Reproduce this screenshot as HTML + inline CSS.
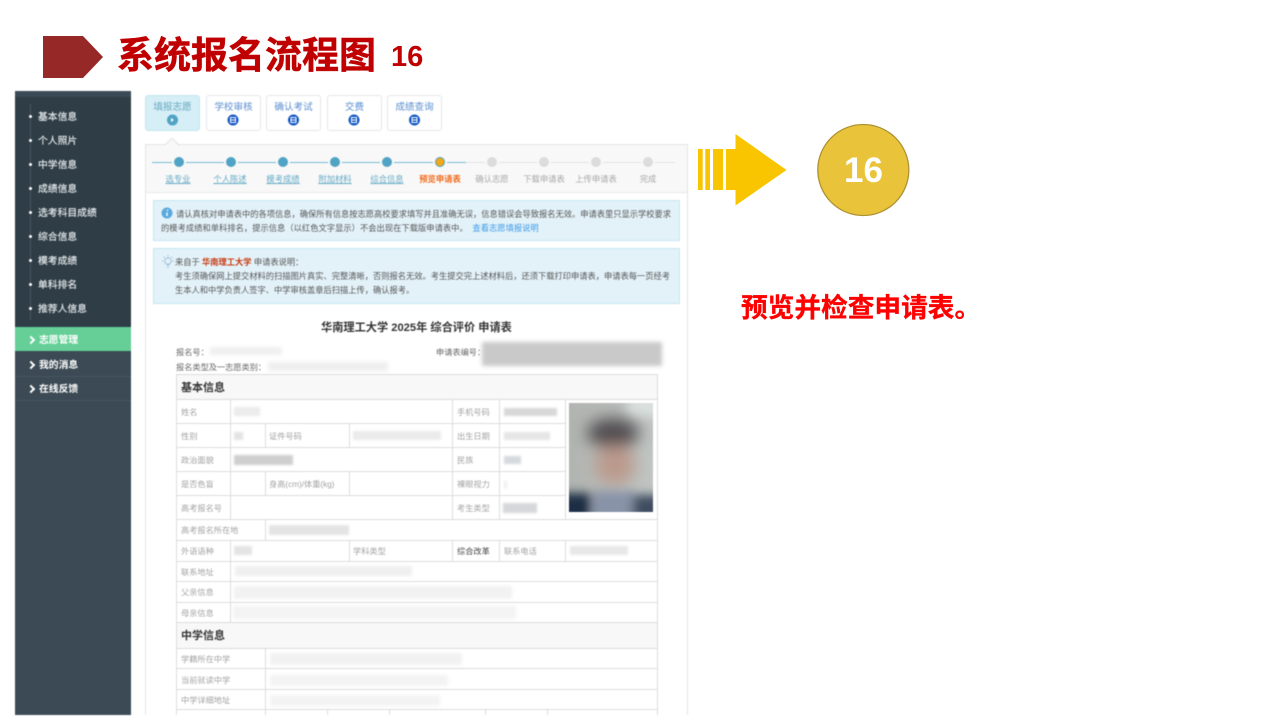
<!DOCTYPE html>
<html lang="zh"><head><meta charset="utf-8"><title>系统报名流程图</title>
<style>
html,body{margin:0;padding:0;background:#fff}
body{width:1280px;height:720px;position:relative;overflow:hidden;font-family:"Liberation Sans","Noto Sans CJK SC",sans-serif}
.t{position:absolute;white-space:nowrap;line-height:14px}
.r{position:absolute}
#app{position:absolute;left:0;top:0;width:1280px;height:715px;overflow:hidden;filter:blur(.45px)}
.s{font-size:9.8px;color:#e6ebed;left:38px;margin-top:2px;-webkit-text-stroke:.15px #e6ebed}
.sb{font-size:9.8px;color:#fff;left:39px;margin-top:2px;font-weight:bold}
.b{position:absolute;width:3px;height:3px;border-radius:50%;background:#fff;left:29px}
.c{position:absolute;left:28px;width:4px;height:4px;margin-top:1px;border:solid #fff;border-width:2px 2px 0 0;transform:rotate(45deg)}
.tab{position:absolute;top:95px;height:34px;background:#fff;border:1px solid #e3e6e8;border-radius:3px;text-align:center;font-size:9.6px;line-height:23px;color:#5b8fd0;white-space:nowrap}
.dot{position:absolute;top:157px;width:10px;height:10px;border-radius:50%;background:#4fa3c4}
.st{position:absolute;top:172px;width:60px;text-align:center;font-size:8.3px;line-height:14px;white-space:nowrap}
.u{color:#63aac6;text-decoration:underline}
.g{color:#a8a8a8}
.h{position:absolute;background:#dcdcdc;height:1px}
.v{position:absolute;background:#dcdcdc;width:1px}
.l{font-size:8.2px;color:#a3a3a3;margin-top:1px}
.bk{position:absolute;background:#d8d8d8;filter:blur(2px)}
.a{font-size:8.25px;color:#555;margin-top:1px}
.hd{font-size:37px;line-height:42px;font-weight:bold;color:#c00000;font-family:'Noto Sans CJK SC',sans-serif;-webkit-text-stroke:.5px #c00000}
</style></head><body>

<svg style="position:absolute;left:0;top:0" width="120" height="90"><polygon points="43,36 83,36 103,57 83,78 43,78" fill="#962828"/></svg>
<div class="t hd" style="left:117px;top:31px">系统报名流程图</div>
<div class="t" style="left:391px;top:37px;font-size:29px;line-height:40px;font-weight:bold;color:#c00000;font-family:'Liberation Sans',sans-serif">16</div>

<div id="app">
<div class="r" style="left:15px;top:91px;width:116px;height:624px;background:#3b4a54"></div>
<div class="r" style="left:15px;top:97px;width:116px;height:230px;background:#2f3d46"></div>
<div class="r" style="left:30px;top:104px;width:1px;height:216px;background:#465560"></div>
<div class="t s" style="top:109px">基本信息</div><div class="b" style="top:115px"></div>
<div class="t s" style="top:133px">个人照片</div><div class="b" style="top:139px"></div>
<div class="t s" style="top:157px">中学信息</div><div class="b" style="top:163px"></div>
<div class="t s" style="top:181px">成绩信息</div><div class="b" style="top:187px"></div>
<div class="t s" style="top:205px">选考科目成绩</div><div class="b" style="top:211px"></div>
<div class="t s" style="top:229px">综合信息</div><div class="b" style="top:235px"></div>
<div class="t s" style="top:253px">模考成绩</div><div class="b" style="top:259px"></div>
<div class="t s" style="top:277px">单科排名</div><div class="b" style="top:283px"></div>
<div class="t s" style="top:301px">推荐人信息</div><div class="b" style="top:307px"></div>
<div class="r" style="left:15px;top:327px;width:116px;height:24px;background:#65cf97"></div>
<div class="r" style="left:15px;top:376px;width:116px;height:1px;background:#455560"></div>
<div class="r" style="left:15px;top:400px;width:116px;height:1px;background:#455560"></div>
<div class="t sb" style="top:332px">志愿管理</div><div class="c" style="top:336px"></div>
<div class="t sb" style="top:357px">我的消息</div><div class="c" style="top:361px"></div>
<div class="t sb" style="top:381px">在线反馈</div><div class="c" style="top:385px"></div>

<div class="tab" style="left:145px;width:53px;background:#d6eef6;border-color:#c5e5ef;color:#66aac4">填报志愿</div>
<div class="tab" style="left:206px;width:53px">学校审核</div>
<div class="tab" style="left:266px;width:53px">确认考试</div>
<div class="tab" style="left:327px;width:53px">交费</div>
<div class="tab" style="left:387px;width:53px">成绩查询</div>
<svg class="r" style="left:145px;top:95px" width="300" height="36">
<circle cx="27.500" cy="25" r="5.500" fill="#4fa3c4"/><polygon points="26,23 26,27 29,25" fill="#fff"/>
<g><circle cx="88" cy="25" r="5.500" fill="#0f55c4"/><rect x="85.500" y="22.500" width="5" height="5" fill="none" stroke="#fff"/><path d="M85.500 25h5" stroke="#fff"/></g>
<g><circle cx="148.500" cy="25" r="5.500" fill="#0f55c4"/><rect x="146" y="22.500" width="5" height="5" fill="none" stroke="#fff"/><path d="M146 25h5" stroke="#fff"/></g>
<g><circle cx="209" cy="25" r="5.500" fill="#0f55c4"/><rect x="206.500" y="22.500" width="5" height="5" fill="none" stroke="#fff"/><path d="M206.500 25h5" stroke="#fff"/></g>
<g><circle cx="269.500" cy="25" r="5.500" fill="#0f55c4"/><rect x="267" y="22.500" width="5" height="5" fill="none" stroke="#fff"/><path d="M267 25h5" stroke="#fff"/></g>
</svg>

<div class="r" style="left:145px;top:144px;width:541px;height:580px;border:1px solid #e4e4e4;background:#fff"></div>
<div class="r" style="left:146px;top:145px;width:541px;height:47px;background:#f8f8f8;border-bottom:1px solid #e8e8e8"></div>
<svg class="r" style="left:165px;top:138px" width="16" height="8"><polygon points="0,7 7,0 14,7" fill="#f8f8f8" stroke="#e4e4e4"/><rect x="1" y="6.500" width="12" height="2" fill="#f8f8f8"/></svg>

<div class="r" style="left:152px;top:162px;width:314px;height:1px;background:#75bcd6"></div>
<div class="r" style="left:466px;top:162px;width:209px;height:1px;background:#e2e2e2"></div>
<div class="dot" style="left:174px;box-shadow:0 0 0 2px #f8f8f8"></div>
<div class="dot" style="left:226px;box-shadow:0 0 0 2px #f8f8f8"></div>
<div class="dot" style="left:278px;box-shadow:0 0 0 2px #f8f8f8"></div>
<div class="dot" style="left:330px;box-shadow:0 0 0 2px #f8f8f8"></div>
<div class="dot" style="left:382px;box-shadow:0 0 0 2px #f8f8f8"></div>
<div class="dot" style="left:435px;top:157px;background:#f3a712;box-sizing:border-box;border:1.500px solid #4fa3c4;box-shadow:0 0 0 2px #f8f8f8"></div>
<div class="dot" style="left:487px;background:#dcdcdc;box-shadow:0 0 0 2px #f8f8f8"></div>
<div class="dot" style="left:539px;background:#dcdcdc;box-shadow:0 0 0 2px #f8f8f8"></div>
<div class="dot" style="left:591px;background:#dcdcdc;box-shadow:0 0 0 2px #f8f8f8"></div>
<div class="dot" style="left:643px;background:#dcdcdc;box-shadow:0 0 0 2px #f8f8f8"></div>
<div class="st" style="left:148px"><span class="u">选专业</span></div>
<div class="st" style="left:200px"><span class="u">个人陈述</span></div>
<div class="st" style="left:253px"><span class="u">模考成绩</span></div>
<div class="st" style="left:305px"><span class="u">附加材料</span></div>
<div class="st" style="left:357px"><span class="u">综合信息</span></div>
<div class="st" style="left:410px;color:#f26a1b;font-weight:bold">预览申请表</div>
<div class="st g" style="left:462px">确认志愿</div>
<div class="st g" style="left:514px">下载申请表</div>
<div class="st g" style="left:566px">上传申请表</div>
<div class="st g" style="left:618px">完成</div>

<div class="r" style="left:153px;top:200px;width:525px;height:39px;background:#e3f2f9;border:1px solid #c5e6f2"></div>
<svg class="r" style="left:161px;top:207px" width="13" height="13"><circle cx="6" cy="6" r="5.500" fill="#5aa9de"/><path d="M6.500 2.800v1.200M6 5.500v3.500" stroke="#fff" stroke-width="1.400"/></svg>
<div class="t a" style="left:176px;top:207px">请认真核对申请表中的各项信息，确保所有信息按志愿高校要求填写并且准确无误，信息错误会导致报名无效。申请表里只显示学校要求</div>
<div class="t a" style="left:161px;top:221px;letter-spacing:.04px">的模考成绩和单科排名，提示信息（以红色文字显示）不会出现在下载版申请表中。 &nbsp;<span style="color:#3c9be8">查看志愿填报说明</span></div>

<div class="r" style="left:153px;top:248px;width:525px;height:54px;background:#e3f2f9;border:1px solid #c5e6f2"></div>
<svg class="r" style="left:161px;top:254px" width="14" height="15" fill="none" stroke="#8fb4cf" stroke-width=".8"><circle cx="7" cy="7" r="3.200"/><path d="M5.500 11h3M6 13h2M7 1v1.500M1 7h1.500M11.500 7H13M2.800 2.800l1 1M11.200 2.800l-1 1"/></svg>
<div class="t a" style="left:175px;top:255px">来自于 <b style="color:#c8380f">华南理工大学</b> 申请表说明：</div>
<div class="t a" style="left:175px;top:269px">考生须确保网上提交材料的扫描图片真实、完整清晰，否则报名无效。考生提交完上述材料后，还须下载打印申请表，申请表每一页经考</div>
<div class="t a" style="left:175px;top:283px">生本人和中学负责人签字、中学审核盖章后扫描上传，确认报考。</div>

<div class="t" style="left:321px;top:321px;font-size:11.200px;font-weight:bold;color:#333">华南理工大学 2025年 综合评价 申请表</div>
<div class="t l" style="left:176px;top:345px;color:#666">报名号：</div>
<div class="t l" style="left:176px;top:360px;color:#666">报名类型及一志愿类别：</div>
<div class="t l" style="left:436px;top:345px;color:#666">申请表编号：</div>
<div class="bk" style="left:210px;top:347px;width:72px;height:8px;background:#efefef"></div>
<div class="bk" style="left:268px;top:362px;width:120px;height:9px;background:#eeeeee"></div>
<div class="bk" style="left:482px;top:342px;width:180px;height:24px;background:#c9c9c9"></div>

<!-- table -->
<div class="r" style="left:177px;top:375px;width:480px;height:24px;background:#f8f8f8"></div>
<div class="r" style="left:177px;top:623px;width:480px;height:25px;background:#f8f8f8"></div>
<div class="h" style="left:176px;width:482px;top:374px"></div>
<div class="h" style="left:176px;width:482px;top:399px"></div>
<div class="h" style="left:176px;width:389px;top:423px"></div>
<div class="h" style="left:176px;width:389px;top:447px"></div>
<div class="h" style="left:176px;width:389px;top:471px"></div>
<div class="h" style="left:176px;width:389px;top:495px"></div>
<div class="h" style="left:176px;width:482px;top:519px"></div>
<div class="h" style="left:176px;width:482px;top:540px"></div>
<div class="h" style="left:176px;width:482px;top:561px"></div>
<div class="h" style="left:176px;width:482px;top:581px"></div>
<div class="h" style="left:176px;width:482px;top:602px"></div>
<div class="h" style="left:176px;width:482px;top:622px"></div>
<div class="h" style="left:176px;width:482px;top:648px"></div>
<div class="h" style="left:176px;width:482px;top:668px"></div>
<div class="h" style="left:176px;width:482px;top:689px"></div>
<div class="h" style="left:176px;width:482px;top:709px"></div>
<div class="v" style="left:176px;top:374px;height:341px"></div>
<div class="v" style="left:657px;top:374px;height:341px"></div>
<div class="v" style="left:230px;top:399px;height:120px"></div>
<div class="v" style="left:265px;top:423px;height:24px"></div>
<div class="v" style="left:349px;top:423px;height:24px"></div>
<div class="v" style="left:265px;top:471px;height:24px"></div>
<div class="v" style="left:349px;top:471px;height:24px"></div>
<div class="v" style="left:452px;top:399px;height:120px"></div>
<div class="v" style="left:499px;top:399px;height:120px"></div>
<div class="v" style="left:565px;top:399px;height:120px"></div>
<div class="v" style="left:265px;top:519px;height:21px"></div>
<div class="v" style="left:230px;top:540px;height:82px"></div>
<div class="v" style="left:349px;top:540px;height:21px"></div>
<div class="v" style="left:452px;top:540px;height:21px"></div>
<div class="v" style="left:499px;top:540px;height:21px"></div>
<div class="v" style="left:565px;top:540px;height:21px"></div>
<div class="v" style="left:265px;top:648px;height:67px"></div>
<div class="v" style="left:327px;top:709px;height:6px"></div>
<div class="v" style="left:389px;top:709px;height:6px"></div>
<div class="v" style="left:485px;top:709px;height:6px"></div>
<div class="v" style="left:547px;top:709px;height:6px"></div>

<div class="t" style="left:181px;top:381px;font-size:11px;font-weight:bold;color:#333">基本信息</div>
<div class="t" style="left:181px;top:629px;font-size:11px;font-weight:bold;color:#333">中学信息</div>
<div class="t l" style="left:181px;top:405px">姓名</div>
<div class="t l" style="left:457px;top:405px">手机号码</div>
<div class="t l" style="left:181px;top:429px">性别</div>
<div class="t l" style="left:269px;top:429px">证件号码</div>
<div class="t l" style="left:457px;top:429px">出生日期</div>
<div class="t l" style="left:181px;top:453px">政治面貌</div>
<div class="t l" style="left:457px;top:453px">民族</div>
<div class="t l" style="left:181px;top:477px">是否色盲</div>
<div class="t l" style="left:269px;top:477px">身高(cm)/体重(kg)</div>
<div class="t l" style="left:457px;top:477px">裸眼视力</div>
<div class="t l" style="left:181px;top:501px">高考报名号</div>
<div class="t l" style="left:457px;top:501px">考生类型</div>
<div class="t l" style="left:181px;top:523px">高考报名所在地</div>
<div class="t l" style="left:181px;top:544px">外语语种</div>
<div class="t l" style="left:353px;top:544px">学科类型</div>
<div class="t l" style="left:457px;top:544px;color:#444">综合改革</div>
<div class="t l" style="left:504px;top:544px">联系电话</div>
<div class="t l" style="left:181px;top:565px">联系地址</div>
<div class="t l" style="left:181px;top:585px">父亲信息</div>
<div class="t l" style="left:181px;top:606px">母亲信息</div>
<div class="t l" style="left:181px;top:652px">学籍所在中学</div>
<div class="t l" style="left:181px;top:673px">当前就读中学</div>
<div class="t l" style="left:181px;top:693px">中学详细地址</div>

<div class="bk" style="left:234px;top:407px;width:26px;height:9px;background:#ececec;filter:blur(1px)"></div>
<div class="bk" style="left:504px;top:408px;width:53px;height:8px;background:#d8d8d8;filter:blur(1px)"></div>
<div class="bk" style="left:234px;top:432px;width:9px;height:8px;background:#e4e4e4;filter:blur(1px)"></div>
<div class="bk" style="left:353px;top:431px;width:88px;height:9px;background:#ebebeb;filter:blur(1px)"></div>
<div class="bk" style="left:504px;top:432px;width:46px;height:8px;background:#e6e6e6;filter:blur(1px)"></div>
<div class="bk" style="left:234px;top:455px;width:59px;height:10px;background:#cfcfcf;filter:blur(1px)"></div>
<div class="bk" style="left:504px;top:456px;width:17px;height:8px;background:#d5dade;filter:blur(1px)"></div>
<div class="bk" style="left:504px;top:481px;width:3px;height:8px;background:#eeeeee;filter:blur(1px)"></div>
<div class="bk" style="left:503px;top:503px;width:34px;height:10px;background:#d5d7da;filter:blur(1px)"></div>
<div class="bk" style="left:269px;top:525px;width:80px;height:10px;background:#e4e4e4;filter:blur(1px)"></div>
<div class="bk" style="left:234px;top:546px;width:18px;height:9px;background:#e4e4e4;filter:blur(1px)"></div>
<div class="bk" style="left:570px;top:546px;width:58px;height:9px;background:#e8e8e8;filter:blur(1px)"></div>
<div class="bk" style="left:235px;top:566px;width:177px;height:10px;background:#efefef;filter:blur(1.500px)"></div>
<div class="bk" style="left:234px;top:586px;width:278px;height:13px;background:#f2f2f2;filter:blur(1.500px)"></div>
<div class="bk" style="left:233px;top:606px;width:283px;height:13px;background:#f3f3f3;filter:blur(1.500px)"></div>
<div class="bk" style="left:270px;top:653px;width:192px;height:12px;background:#f2f2f2;filter:blur(1.500px)"></div>
<div class="bk" style="left:270px;top:675px;width:178px;height:11px;background:#f3f3f3;filter:blur(1.500px)"></div>
<div class="bk" style="left:270px;top:695px;width:170px;height:11px;background:#f3f3f3;filter:blur(1.500px)"></div>

<svg class="r" style="left:569px;top:403px" width="84" height="109">
<defs>
<linearGradient id="bg" x1="0" y1="0" x2="1" y2="0"><stop offset="0" stop-color="#b1b4b0"/><stop offset="1" stop-color="#c0c5c3"/></linearGradient>
<filter id="fb" x="-60%" y="-60%" width="220%" height="220%"><feGaussianBlur stdDeviation="8"/></filter>
<filter id="fc" x="-60%" y="-60%" width="220%" height="220%"><feGaussianBlur stdDeviation="5"/></filter>
<clipPath id="cp"><rect width="84" height="109"/></clipPath>
</defs>
<g clip-path="url(#cp)"><rect width="84" height="109" fill="url(#bg)"/>
<rect x="58" y="-6" width="32" height="20" fill="#dbe1df" filter="url(#fc)"/>
<g filter="url(#fb)">
<ellipse cx="44" cy="30" rx="26" ry="15" fill="#4f4b4f"/>
<ellipse cx="46" cy="62" rx="20" ry="20" fill="#bb9a8c"/>
</g>
<g filter="url(#fc)">
<rect x="24" y="88" width="42" height="34" fill="#8893a8"/>
<path d="M-14 90h36v34h-36z" fill="#1f2e45"/>
<path d="M64 92h34v30h-34z" fill="#414d60"/>
</g></g></svg>
</div>

<svg style="position:absolute;left:690px;top:125px" width="105" height="90" fill="#f9c400">
<rect x="8" y="24" width="4.700" height="41"/><rect x="15.300" y="24" width="4.700" height="41"/><rect x="23" y="24" width="10" height="41"/>
<polygon points="36,24 45.500,24 45.500,9 96.500,45 45.500,80.500 45.500,65 36,65"/>
</svg>
<svg style="position:absolute;left:810px;top:118px" width="106" height="106"><circle cx="53.300" cy="52" r="45.500" fill="#e9c43a" stroke="#ae9233" stroke-width="1.300"/></svg>
<div class="t" style="left:844px;top:147px;font-size:35px;line-height:48px;font-weight:bold;color:#fff;font-family:'Liberation Sans',sans-serif">16</div>
<div class="t" style="left:741px;top:288px;font-size:26.700px;line-height:36px;font-weight:bold;color:#ff0000;font-family:'Noto Sans CJK SC',sans-serif;-webkit-text-stroke:.3px #f00">预览并检查申请表。</div>
</body></html>
